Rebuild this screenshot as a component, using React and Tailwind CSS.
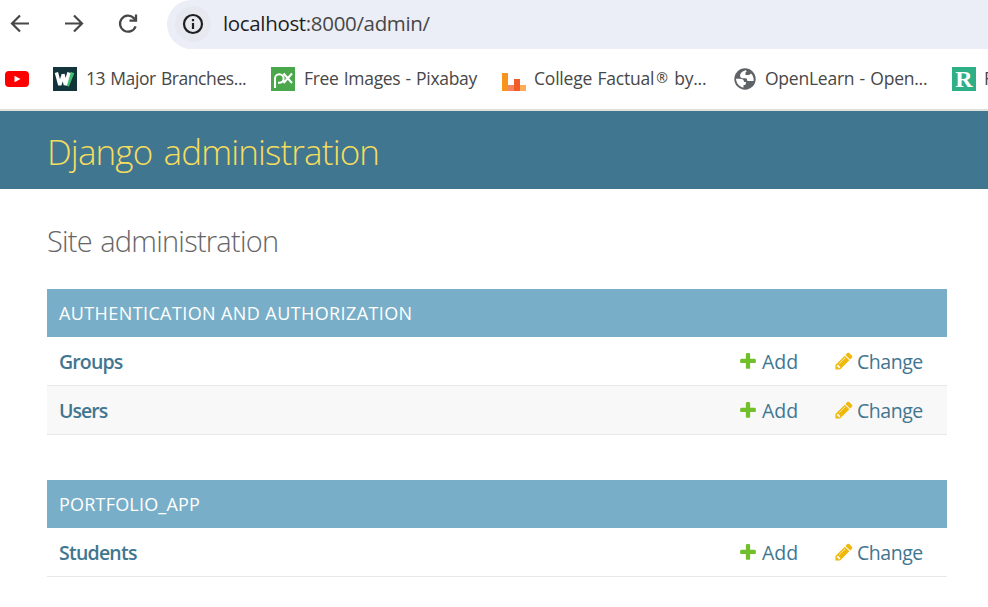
import React from "react";

function AddIcon() {
  return (
    <svg className="mb-px h-5 w-5 shrink-0" viewBox="0 0 1792 1792" fill="#70bf2b">
      <path d="M1600 796v192q0 40-28 68t-68 28h-416v416q0 40-28 68t-68 28h-192q-40 0-68-28t-28-68v-416h-416q-40 0-68-28t-28-68v-192q0-40 28-68t68-28h416v-416q0-40 28-68t68-28h192q40 0 68 28t28 68v416h416q40 0 68 28t28 68z" />
    </svg>
  );
}

function ChangeIcon() {
  return (
    <svg className="mb-px h-5 w-5 shrink-0" viewBox="0 0 1792 1792" fill="#efb80b">
      <path d="M491 1536l91-91-235-235-91 91v107h128v128h107zm523-928q0-22-22-22-10 0-17 7l-542 542q-7 7-7 17 0 22 22 22 10 0 17-7l542-542q7-7 7-17zm-54-192l416 416-832 832h-416v-416zm683 96q0 53-37 90l-166 166-416-416 166-165q36-38 90-38 53 0 91 38l235 234q37 39 37 91z" />
    </svg>
  );
}

function Toolbar() {
  return (
    <div className="flex h-[49px] items-start">
      <div className="flex w-[167px] shrink-0 pl-2 pt-[11px]">
        <svg className="h-6 w-6" viewBox="0 0 24 24" fill="none" stroke="#474747" strokeWidth="2.2">
          <path d="M21 12.5H4.5M12 4.5l-8 8 8 8" />
        </svg>
        <svg className="ml-[30px] h-6 w-6" viewBox="0 0 24 24" fill="none" stroke="#474747" strokeWidth="2.2">
          <path d="M3 12.5h16.5M12 4.5l8 8-8 8" />
        </svg>
        <svg className="ml-[30px] h-6 w-6" viewBox="0 0 24 24" fill="none" stroke="#474747" strokeWidth="2.3">
          <path d="M19.6 15.3A8 8 0 1 1 17.8 7.1L20 9.3" />
          <path d="M20 3.5v6.2H13.5" />
        </svg>
      </div>
      <div className="flex h-[49px] grow items-center rounded-l-full bg-[#ebeef7] pl-2">
        <div className="mb-px flex h-9 w-9 items-center justify-center rounded-full bg-[#e6e9f0]">
          <svg className="h-[22px] w-[22px]" viewBox="0 0 22 22" fill="none" stroke="#1f1f1f">
            <circle cx="11" cy="11" r="9" strokeWidth="2.2" />
            <path d="M11 10v6M11 6v2.2" strokeWidth="2.2" />
          </svg>
        </div>
        <span className="ml-3 whitespace-nowrap pb-[3px] text-[20.5px] tracking-[-0.34px] text-[#474747]">
          <span className="text-[#1f1f1f]">localhost</span>:8000/admin/
        </span>
      </div>
    </div>
  );
}

function Bookmarks() {
  return (
    <div className="flex h-[62px] items-center overflow-hidden whitespace-nowrap border-b-2 border-[#dfe1dd] text-[17.5px] text-[#474747]">
      <svg className="ml-[5px] h-4 w-6 shrink-0" viewBox="0 0 24 16">
        <rect width="24" height="16" rx="4" fill="#f00" />
        <path d="M9.5 4.8v6.4L15.5 8z" fill="#fff" />
      </svg>
      <div className="ml-6 flex w-[218px] shrink-0 items-center">
        <svg className="h-6 w-6 shrink-0" viewBox="0 0 24 24" fill="none" strokeWidth="3.4">
          <rect width="24" height="24" fill="#12353b" />
          <path d="M14.2 19L19.6 5.5" stroke="#3fbf70" strokeWidth="3.6" />
          <path d="M3.4 5.5L6.8 18 10.3 7.5M10 7L12.300 18 16 5.500" stroke="#fff" strokeLinejoin="bevel" />
        </svg>
        <span className="ml-[9px] pb-0.5 tracking-[-0.42px] [word-spacing:1px]">13 Major Branches...</span>
      </div>
      <div className="flex w-[231px] shrink-0 items-center">
        <svg className="h-6 w-6 shrink-0" viewBox="0 0 24 24" fill="none" stroke="#fff" strokeWidth="2">
          <rect width="24" height="24" fill="#4ba74b" stroke="none" />
          <path d="M4 21v-9.5a4.3 4.3 0 1 1 4.3 4.3H7M12.5 6.5l8.5 9.5M21 6.5L12.5 16" />
        </svg>
        <span className="ml-[9px] pb-0.5 tracking-[-0.32px] [word-spacing:1px]">Free Images - Pixabay</span>
      </div>
      <div className="flex w-[232px] shrink-0 items-center">
        <svg className="h-6 w-6 shrink-0" viewBox="0 0 24 24">
          <path d="M0 6h6v18H0z" fill="#f7941e" />
          <path d="M6 18h6v6H6z" fill="#f6845b" />
          <path d="M12 12h6v12h-6z" fill="#f15a29" />
          <path d="M18 18h6v6h-6z" fill="#fbad58" />
        </svg>
        <span className="ml-2 pb-0.5 tracking-[-0.2px] [word-spacing:1px]">
          College Factual<span className="ml-0.5 mr-px align-[2px] text-[14px]">®</span> by...
        </span>
      </div>
      <div className="flex w-[218px] shrink-0 items-center">
        <svg className="h-[22px] w-[22px] shrink-0" viewBox="0 0 22 22">
          <circle cx="11" cy="11" r="10.7" fill="#5f6368" />
          <path d="M11.5 2.3C8 3.5 6 5.5 6 7.5c0 2 1.5 2.8 3.5 2.8h2c1 0 1.5.6 1.5 1.4 0 1 .8 1.3 1.800 1.300h4.800c.3-3-.5-5.500-2.600-7.500C16 6.500 15 7 14 7h-2.500V5.200c0-1 .5-1.700 1.500-2z" fill="#fff" />
          <path d="M2 10.8h4c2.5 0 4 1.200 4 3.200h2c0 2.500-.5 3-2.500 3v2.500C5.500 19 2.300 15.500 2 10.800z" fill="#fff" />
        </svg>
        <span className="ml-[9px] pb-0.5 tracking-[-0.24px] [word-spacing:1px]">OpenLearn - Open...</span>
      </div>
      <span className="flex h-6 w-6 shrink-0 items-center justify-center bg-[#2faf85] font-['Liberation_Serif',serif] text-[24px] font-bold leading-6 text-white">R</span>
      <span className="ml-2 pb-0.5">R</span>
    </div>
  );
}

function Module({ title, titleClass, rows, className }) {
  return (
    <section className={className}>
      <h2 className={"flex h-12 items-center bg-[#79aec8] px-3 text-[18px] text-white " + titleClass}>{title}</h2>
      {rows.map(([name, nameClass]) => (
        <div key={name} className="flex h-[49px] items-center border-b border-[#e8e8e8] pl-3 pt-px text-[19.5px] text-[#417690] odd:bg-[#f8f8f8] even:bg-white">
          <span className={"grow pt-px font-semibold " + nameClass}>{name}</span>
          <span className="flex w-[95px] items-center gap-1">
            <AddIcon />
            <span className="pt-px">Add</span>
          </span>
          <span className="flex w-[114px] items-center gap-[3px] pl-px">
            <ChangeIcon />
            <span className="pt-px tracking-[-0.45px]">Change</span>
          </span>
        </div>
      ))}
    </section>
  );
}

export default function App() {
  return (
    <div className="h-[607px] overflow-hidden bg-white font-['Open_Sans','Noto_Sans',sans-serif]">
      <Toolbar />
      <Bookmarks />
      <header className="flex h-[78px] items-center bg-[#417690] pl-[47px] pt-[5px]">
        <h1 className="whitespace-nowrap text-[35px] font-light tracking-[-0.87px] text-[#f5dd5d] [word-spacing:3px]">Django administration</h1>
      </header>
      <main className="pl-[47px] pr-[41px]">
        <h1 className="flex h-[100px] items-center whitespace-nowrap pt-[3px] text-[29px] font-light tracking-[-0.76px] text-[#666] [word-spacing:1.5px]">Site administration</h1>
        <Module
          title="AUTHENTICATION AND AUTHORIZATION"
          titleClass="tracking-[0.4px]"
          rows={[["Groups", "tracking-[-0.85px]"], ["Users", "tracking-[-0.95px]"]]}
        />
        <Module
          className="mt-[45px]"
          title="PORTFOLIO_APP"
          titleClass="tracking-[0.2px]"
          rows={[["Students", "tracking-[-0.77px]"]]}
        />
      </main>
    </div>
  );
}
